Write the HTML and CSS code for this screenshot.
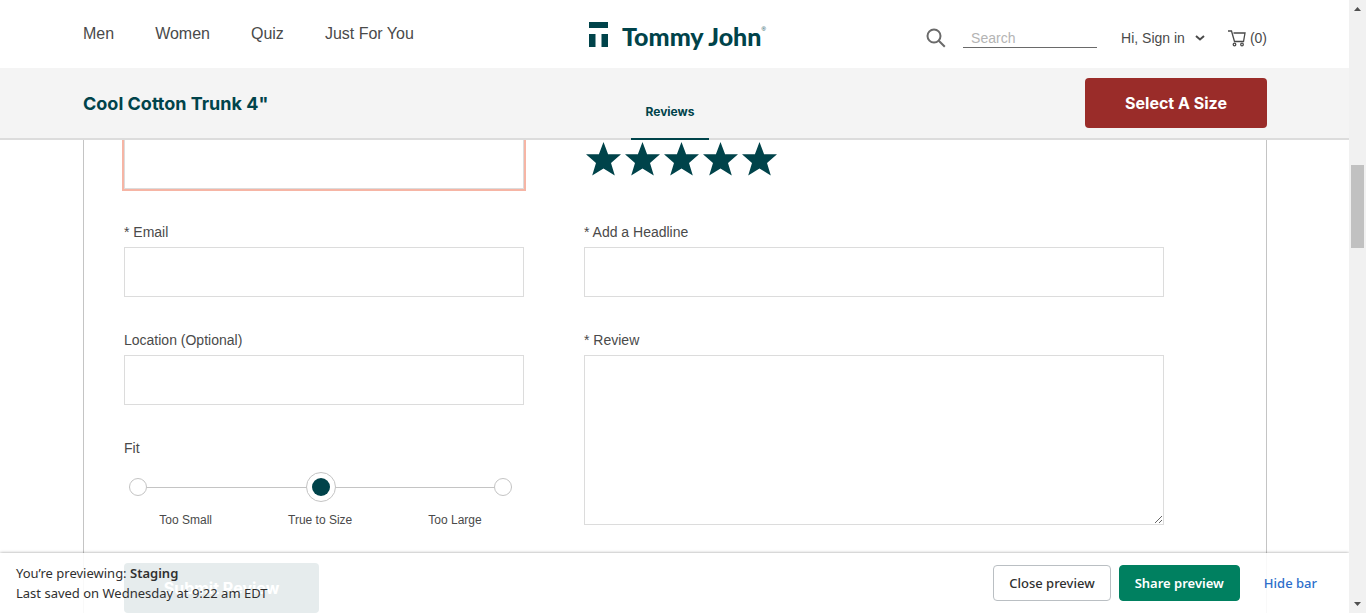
FILE: index.html
```html
<!DOCTYPE html>
<html lang="en">
<head>
<meta charset="utf-8">
<title>Cool Cotton Trunk 4" | Tommy John</title>
<link rel="stylesheet" href="styles.css">
</head>
<body>
<div class="page">
  <header class="header">
    <nav class="nav">
      <a href="#">Men</a>
      <a href="#">Women</a>
      <a href="#">Quiz</a>
      <a href="#">Just For You</a>
    </nav>
    <a class="logo" href="#">
      <svg class="logo-mark" viewBox="0 0 19 25" aria-hidden="true"><path d="M0 0h19v6H0zM0 12h6.500v13H0zM12.500 12H19v13h-6.500z"/></svg>
      <span class="logo-name">Tommy John</span><span class="logo-reg">®</span>
    </a>
    <div class="tools">
      <button class="icon-button" type="button" aria-label="Search">
        <svg class="search-icon" viewBox="0 0 20 20"><circle cx="8" cy="8" r="6.500"/><path d="M12.800 12.800l6 6"/></svg>
      </button>
      <input class="search" type="search" placeholder="Search" aria-label="Search">
      <button class="account" type="button">Hi, Sign in
        <svg class="chevron" viewBox="0 0 10 6"><path d="M1 1l4 3.500L9 1"/></svg>
      </button>
      <a class="cart" href="#" aria-label="Cart, 0 items">
        <svg class="cart-icon" viewBox="0 0 18 17"><path d="M0 1h3.500l3 10.500h9L17 3H5.500"/><circle cx="6.500" cy="14.500" r="1.300"/><circle cx="14" cy="14.500" r="1.300"/></svg>
        <span>(0)</span>
      </a>
    </div>
  </header>

  <section class="product-bar">
    <h1 class="product-title">Cool Cotton Trunk 4"</h1>
    <a class="tab" href="#reviews">Reviews</a>
    <button class="size-button" type="button">Select A Size</button>
  </section>

  <main class="content" id="reviews">
    <form class="review-form">
      <div class="column">
        <input class="box box-error" type="text" aria-label="Name">
        <div class="field">
          <label for="email">* Email</label>
          <input class="box" id="email" type="email">
        </div>
        <div class="field">
          <label for="location">Location (Optional)</label>
          <input class="box" id="location" type="text">
        </div>
        <fieldset class="fit">
          <legend>Fit</legend>
          <div class="fit-track">
            <input class="fit-dot" type="radio" name="fit" id="fit-small">
            <input class="fit-dot" type="radio" name="fit" id="fit-true" checked>
            <input class="fit-dot" type="radio" name="fit" id="fit-large">
          </div>
          <div class="fit-labels">
            <label for="fit-small">Too Small</label>
            <label for="fit-true">True to Size</label>
            <label for="fit-large">Too Large</label>
          </div>
        </fieldset>
        <button class="submit" type="submit">Submit Review</button>
      </div>
      <div class="column">
        <div class="stars">
          <button class="star" type="button" aria-label="1 star"><svg viewBox="0 0 35 34"><path d="M17.500 0L22.100 12.300H35L25 20.900 28.800 33.500 17.500 26.500 6.200 33.500 10 20.900 0 12.300h12.900z"/></svg></button>
          <button class="star" type="button" aria-label="2 stars"><svg viewBox="0 0 35 34"><path d="M17.500 0L22.100 12.300H35L25 20.900 28.800 33.500 17.500 26.500 6.200 33.500 10 20.900 0 12.300h12.900z"/></svg></button>
          <button class="star" type="button" aria-label="3 stars"><svg viewBox="0 0 35 34"><path d="M17.500 0L22.100 12.300H35L25 20.900 28.800 33.500 17.500 26.500 6.200 33.500 10 20.900 0 12.300h12.900z"/></svg></button>
          <button class="star" type="button" aria-label="4 stars"><svg viewBox="0 0 35 34"><path d="M17.500 0L22.100 12.300H35L25 20.900 28.800 33.500 17.500 26.500 6.200 33.500 10 20.900 0 12.300h12.900z"/></svg></button>
          <button class="star" type="button" aria-label="5 stars"><svg viewBox="0 0 35 34"><path d="M17.500 0L22.100 12.300H35L25 20.900 28.800 33.500 17.500 26.500 6.200 33.500 10 20.900 0 12.300h12.900z"/></svg></button>
        </div>
        <div class="field">
          <label for="headline">* Add a Headline</label>
          <input class="box" id="headline" type="text">
        </div>
        <div class="field">
          <label for="review">* Review</label>
          <textarea class="box box-tall" id="review"></textarea>
        </div>
      </div>
    </form>
  </main>

  <aside class="preview-bar">
    <p class="preview-text">You’re previewing: <strong>Staging</strong><br>Last saved on Wednesday at 9:22 am EDT</p>
    <div class="preview-actions">
      <button class="preview-button" type="button">Close preview</button>
      <button class="preview-button preview-share" type="button">Share preview</button>
      <button class="preview-hide" type="button">Hide bar</button>
    </div>
  </aside>
</div>
<div class="scrollbar" aria-hidden="true">
  <svg viewBox="0 0 17 17"><path d="M5 11l3.500-4L12 11z"/></svg>
  <span></span>
  <span class="thumb"></span>
  <span></span>
  <svg viewBox="0 0 17 17"><path d="M5 6l3.500 4L12 6z"/></svg>
</div>
</body>
</html>
```

FILE: styles.css
```css
* { box-sizing: border-box; }
body {
  display: flex;
  height: 100vh;
  margin: 0;
  overflow: hidden;
  background: #fff;
  color: #4a4a4a;
  font: 14px/20px "Liberation Sans", Arial, sans-serif;
}
a { color: inherit; text-decoration: none; }
button { padding: 0; border: 0; background: none; color: inherit; font: inherit; cursor: pointer; }
svg { display: block; }

.page { position: relative; flex: 1; min-width: 0; overflow: hidden; }

.header {
  display: grid;
  grid-template-columns: 506fr auto 502fr;
  height: 68px;
  padding: 0 82px 0 83px;
}
.nav { display: flex; gap: 41px; padding-top: 24px; font-size: 16px; white-space: nowrap; }
.logo { display: flex; width: 176px; padding-top: 22px; color: #00434a; }
.logo-mark { flex: none; width: 19px; height: 25px; margin-right: 14px; fill: #00434a; }
.logo-name { font: 900 25px/28px Lato, sans-serif; white-space: nowrap; }
.logo-reg { font-size: 6px; line-height: 14px; }
.tools { display: flex; justify-content: flex-end; align-items: center; padding-top: 8px; }
.icon-button { margin-right: 17px; }
.search-icon { width: 20px; height: 20px; fill: none; stroke: #6a6a6a; stroke-width: 2; }
.search {
  width: 134px;
  height: 20px;
  margin-right: 24px;
  padding: 0 8px;
  border: 0;
  border-bottom: 1px solid #6a6a6a;
  background: none;
  font: inherit;
  appearance: none;
}
.search::placeholder { color: #b4b4b4; }
.account { display: flex; align-items: center; gap: 10px; margin-right: 23px; }
.chevron { width: 10px; height: 6px; fill: none; stroke: #4a4a4a; stroke-width: 2; }
.cart { display: flex; align-items: center; gap: 4px; }
.cart-icon { width: 18px; height: 17px; fill: none; stroke: #4a4a4a; stroke-width: 1.3; }

.product-bar {
  position: relative;
  z-index: 1;
  display: grid;
  grid-template-columns: 548fr auto 558fr;
  align-items: center;
  height: 72px;
  padding: 0 82px 0 83px;
  background: #f4f4f4;
  box-shadow: inset 0 -2px #dcdcdc;
  color: #00434a;
}
.product-title { margin: 0; font: 700 18px/24px Inter, sans-serif; }
.tab {
  min-width: 78px;
  height: 72px;
  padding-top: 34px;
  border-bottom: 2px solid #00434a;
  font: 700 12px/20px Inter, sans-serif;
  text-align: center;
}
.size-button {
  justify-self: end;
  width: 182px;
  height: 50px;
  margin-bottom: 2px;
  border-radius: 4px;
  background: #9a2c29;
  color: #fff;
  font: 700 16px/24px Inter, sans-serif;
}

.content { margin-top: -1px; padding: 0 82px 0 83px; }
.review-form {
  display: grid;
  grid-template-columns: 400fr 580fr;
  gap: 60px;
  padding: 0 102px 0 40px;
  border: solid #c4c4c4;
  border-width: 0 1px;
}
.column { display: flex; flex-direction: column; gap: 33px; min-width: 0; }
.field { display: flex; flex-direction: column; gap: 5px; }
.box {
  display: block;
  width: 100%;
  height: 50px;
  padding: 0 12px;
  border: 1px solid #dcdcdc;
  border-radius: 0;
  background: #fff;
  font: inherit;
}
.box-error { outline: 2px solid #f6b5a5; }
.box-tall { height: 170px; padding: 12px; }
.fit { min-width: 0; margin: 0; padding: 0 7px 0 0; border: 0; }
.fit legend { padding: 0; }
.fit-track {
  display: flex;
  align-items: center;
  justify-content: space-between;
  height: 30px;
  margin: 14px 5px 8px;
  background: linear-gradient(#c4c4c4, #c4c4c4) center / 100% 1px no-repeat;
}
.fit-dot {
  width: 18px;
  height: 18px;
  margin: 0;
  border: 1px solid #c4c4c4;
  border-radius: 50%;
  background: #fff;
  appearance: none;
}
.fit-dot:checked {
  width: 30px;
  height: 30px;
  padding: 5px;
  background: linear-gradient(#00434a, #00434a) content-box, #fff;
}
.fit-labels { display: flex; justify-content: center; gap: 76px; font-size: 12px; }
.submit {
  width: 195px;
  height: 50px;
  border-radius: 4px;
  background: #00434a;
  color: #fff;
  font: 700 16px/24px Inter, sans-serif;
}
.stars { display: flex; gap: 4px; height: 50px; padding: 3px 2px 0; }
.star { width: 35px; height: 34px; }
.star svg { width: 35px; height: 34px; fill: #00434a; }

.preview-bar {
  position: absolute;
  right: 0;
  bottom: 0;
  left: 0;
  z-index: 2;
  display: flex;
  align-items: center;
  justify-content: space-between;
  height: 60px;
  padding: 0 32px 0 16px;
  background: rgba(255, 255, 255, 0.9);
  box-shadow: 0 0 3px rgba(0, 0, 0, 0.4);
  color: #303030;
  font: 13px/20px "Noto Sans", "Open Sans", sans-serif;
}
.preview-text { margin: 0; }
.preview-text strong { font-weight: 600; }
.preview-actions { display: flex; align-items: center; gap: 8px; }
.preview-button {
  height: 36px;
  padding: 0 15px;
  border: 1px solid #babfc3;
  border-radius: 4px;
  background: #fff;
  font-weight: 500;
}
.preview-share { border-color: #008060; background: #008060; color: #fff; font-weight: 600; }
.preview-hide { margin-left: 16px; color: #2c6ecb; font-weight: 500; }

.scrollbar {
  display: grid;
  grid-template-rows: 17px 148fr 83fr 348fr 17px;
  width: 17px;
  background: #f1f1f1;
}
.scrollbar svg { width: 17px; height: 17px; fill: #505050; }
.thumb { margin: 0 2px; background: #c1c1c1; }
```
